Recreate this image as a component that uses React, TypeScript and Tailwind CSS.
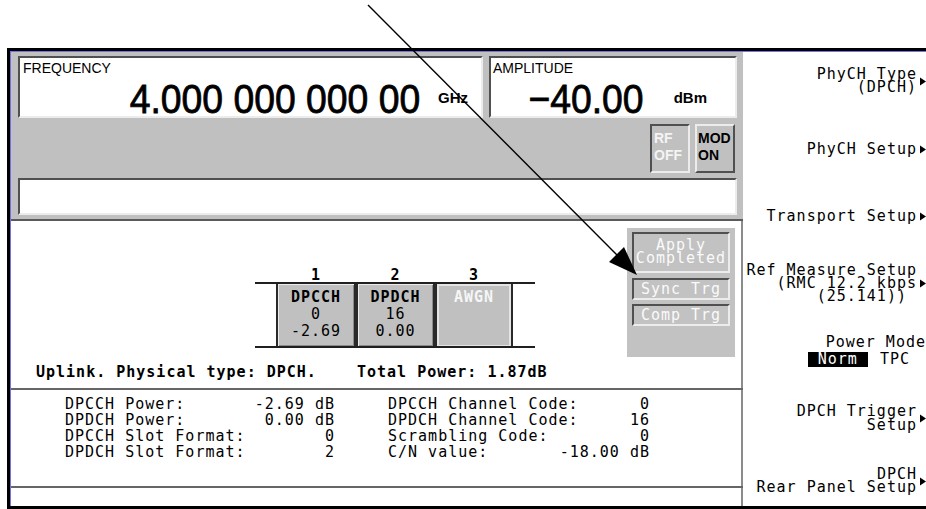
import React from "react";

const mono = "font-['DejaVu_Sans_Mono',monospace] tracking-[1px] text-[15px]";
const sans = "font-['Liberation_Sans',Arial,sans-serif]";
const inset =
  "border-2 border-t-[#505050] border-l-[#505050] border-b-[#ececec] border-r-[#ececec]";
const outset =
  "border-2 border-t-[#ececec] border-l-[#ececec] border-b-[#505050] border-r-[#505050]";
const bigDigits = `inline-block origin-right scale-x-[0.91] ${sans} text-[41px] leading-[34px] whitespace-pre [-webkit-text-stroke:0.8px_#000]`;

const leftInfo = [
  ["DPCCH Power:", "-2.69 dB"],
  ["DPDCH Power:", "0.00 dB"],
  ["DPCCH Slot Format:", "0"],
  ["DPDCH Slot Format:", "2"],
];

const rightInfo = [
  ["DPCCH Channel Code:", "0"],
  ["DPDCH Channel Code:", "16"],
  ["Scrambling Code:", "0"],
  ["C/N value:", "-18.00 dB"],
];

function Arrow() {
  return (
    <svg width="9" height="9" viewBox="0 0 9 9" className="shrink-0">
      <path d="M3 0.5 L9 4.5 L3 8.5 Z" fill="#000" />
    </svg>
  );
}

function SoftKey({
  lines,
  className = "",
  leading = "leading-[13px]",
}: {
  lines: string[];
  className?: string;
  leading?: string;
}) {
  return (
    <div className={`flex items-center justify-end ${className}`}>
      <div className={`text-right whitespace-pre ${leading}`}>
        {lines.map((l) => (
          <div key={l}>{l}</div>
        ))}
      </div>
      <Arrow />
    </div>
  );
}

function SoftKeys() {
  return (
    <div className={`flex-1 flex flex-col bg-white text-black ${mono}`}>
      <SoftKey className="mt-[16px]" lines={["PhyCH Type", "(DPCH)"]} />
      <SoftKey className="mt-[49px]" lines={["PhyCH Setup"]} />
      <SoftKey className="mt-[54px]" lines={["Transport Setup"]} />
      <SoftKey
        className="mt-[41px]"
        lines={["Ref Measure Setup", "(RMC 12.2 kbps", "(25.141)) "]}
      />
      {/* power mode toggle, no arrow */}
      <div className="mt-[33px] text-right">
        <div className="leading-[13px]">Power Mode</div>
        <div className="mt-[3px] h-[15px] leading-[15px] pr-[16px] whitespace-pre">
          <span className="inline-block h-[15px] bg-black text-white px-[10px]">Norm</span>
          <span className="ml-[12px]">TPC</span>
        </div>
      </div>
      <SoftKey className="mt-[37px]" leading="leading-[14px]" lines={["DPCH Trigger", "Setup"]} />
      <SoftKey className="mt-[36px]" lines={["DPCH", "Rear Panel Setup"]} />
    </div>
  );
}

function TopPanel() {
  return (
    <div className="h-[167px] bg-[#c0c0c0] pt-[4px] pl-[7px] pr-[6px] flex flex-col">
      <div className="flex gap-[6px] h-[62px]">
        {/* frequency */}
        <div className={`w-[465px] h-full bg-white ${inset} flex flex-col`}>
          <div className={`${sans} text-[14px] leading-none pl-[3px] pt-[3px]`}>FREQUENCY</div>
          <div className="mt-auto flex items-end justify-end pr-[13px]">
            <span className={bigDigits}>4.000 000 000 00</span>
            <span className={`ml-[18px] mb-[11px] ${sans} font-bold text-[15px] leading-none`}>GHz</span>
          </div>
        </div>
        {/* amplitude */}
        <div className={`w-[248px] h-full bg-white ${inset} flex flex-col`}>
          <div className={`${sans} text-[14px] leading-none pl-[2px] pt-[3px]`}>AMPLITUDE</div>
          <div className="mt-auto flex items-end justify-end pr-[28px]">
            <span className={bigDigits}>−40.00</span>
            <span className={`ml-[30px] mb-[11px] ${sans} font-bold text-[15px] leading-none`}>dBm</span>
          </div>
        </div>
      </div>

      <div className="h-[60px] flex justify-end gap-[5px] pt-[6px] pr-[2px]">
        <div
          className={`w-[40px] h-[49px] ${inset} ${sans} font-bold text-[14px] leading-[17px] text-[#f4f4f4] pl-[2px] pt-[4px]`}
        >
          <div>RF</div>
          <div>OFF</div>
        </div>
        <div
          className={`w-[40px] h-[49px] ${outset} ${sans} font-bold text-[14px] leading-[17px] text-black pl-[1px] pt-[4px]`}
        >
          <div>MOD</div>
          <div>ON</div>
        </div>
      </div>

      <div className={`h-[37px] bg-white ${inset}`} />
    </div>
  );
}

function ChannelTable() {
  return (
    <div className={`mt-[39px] w-[280px] ${mono}`}>
      <div className="flex pl-[21px] h-[15px] pt-[2px] leading-[13px] font-bold text-black">
        <span className="w-[80px] text-center">1</span>
        <span className="w-[79px] text-center">2</span>
        <span className="w-[78px] text-center">3</span>
      </div>
      <div className="h-[66px] border-y-2 border-[#202020] flex pl-[21px]">
        <div className="w-[80px] h-full bg-[#c0c0c0] border-x-2 border-[#2a2a2a] shadow-[inset_1px_1px_0_#ececec,inset_-1px_-1px_0_#8a8a8a] pt-[5px] text-center leading-[17px] text-black">
          <div className="font-bold">DPCCH</div>
          <div>0</div>
          <div>-2.69</div>
        </div>
        <div className="w-[79px] h-full bg-[#c0c0c0] border-x-2 border-[#2a2a2a] shadow-[inset_1px_1px_0_#ececec,inset_-1px_-1px_0_#8a8a8a] pt-[5px] text-center leading-[17px] text-black">
          <div className="font-bold">DPDCH</div>
          <div>16</div>
          <div>0.00</div>
        </div>
        <div className="w-[78px] h-full bg-[#c0c0c0] border-x-2 border-[#2a2a2a] shadow-[inset_2px_2px_0_#e4e4e4,inset_-2px_-1px_0_#e4e4e4] pt-[5px] text-center leading-[17px] text-[#f6f6f6]">
          <div className="font-bold">AWGN</div>
        </div>
      </div>
    </div>
  );
}

function ApplyPanel() {
  return (
    <div className={`ml-[92px] w-[108px] h-[129px] bg-[#c2c2c2] pt-[4px] px-[5px] flex flex-col ${mono} text-[#fafafa]`}>
      <div className={`h-[41px] ${inset} pt-[5px] text-center leading-[13px]`}>
        <div>Apply</div>
        <div>Completed</div>
      </div>
      <div className={`mt-[5px] h-[22px] ${inset} flex items-center justify-center leading-[13px]`}>
        Sync Trg
      </div>
      <div className={`mt-[4px] h-[22px] ${inset} flex items-center justify-center leading-[13px]`}>
        Comp Trg
      </div>
    </div>
  );
}

function Display() {
  return (
    <div className="w-[732px] h-full flex flex-col">
      <TopPanel />
      <div className="h-[2px] bg-[#5a5a5a]" />

      {/* channel area */}
      <div className="h-[167px] bg-white border-r-2 border-[#8c8c8c] flex flex-col">
        <div className="flex items-start pt-[7px] pl-[244px]">
          <ChannelTable />
          <ApplyPanel />
        </div>
        <div className={`mt-[9px] pl-[25px] flex leading-[13px] font-bold text-black ${mono}`}>
          <span className="w-[321px] whitespace-pre">Uplink. Physical type: DPCH.</span>
          <span className="whitespace-pre">Total Power: 1.87dB</span>
        </div>
      </div>
      <div className="h-[2px] bg-[#666666]" />

      {/* parameter summary */}
      <div className={`h-[96px] bg-white border-r-2 border-[#8c8c8c] flex pt-[6px] text-black ${mono} leading-[16px]`}>
        <div className="ml-[54px] w-[270px]">
          {leftInfo.map(([k, v]) => (
            <div key={k} className="flex justify-between whitespace-pre">
              <span>{k}</span>
              <span>{v}</span>
            </div>
          ))}
        </div>
        <div className="ml-[53px] w-[262px]">
          {rightInfo.map(([k, v]) => (
            <div key={k} className="flex justify-between whitespace-pre">
              <span>{k}</span>
              <span>{v}</span>
            </div>
          ))}
        </div>
      </div>
      <div className="h-[2px] bg-[#666666]" />
      <div className="flex-1 bg-white border-r-2 border-[#8c8c8c]" />
    </div>
  );
}

export default function App() {
  return (
    <div className="relative w-[926px] h-[509px] bg-white overflow-hidden">
      <div className="h-[48px]" />
      <div className="ml-[7px] h-[461px] border-t-[3px] border-l-[3px] border-b-[3px] border-black">
        <div className="h-full border-t border-l border-[#7474e6] flex">
          <Display />
          <SoftKeys />
        </div>
      </div>

      {/* callout arrow drawn over the screen */}
      <svg className="absolute inset-0 pointer-events-none" width="926" height="509">
        <line x1="368" y1="5" x2="618" y2="256" stroke="#000" strokeWidth="1.4" />
        <polygon points="637,275 624,247 609,262" fill="#000" />
      </svg>
    </div>
  );
}
